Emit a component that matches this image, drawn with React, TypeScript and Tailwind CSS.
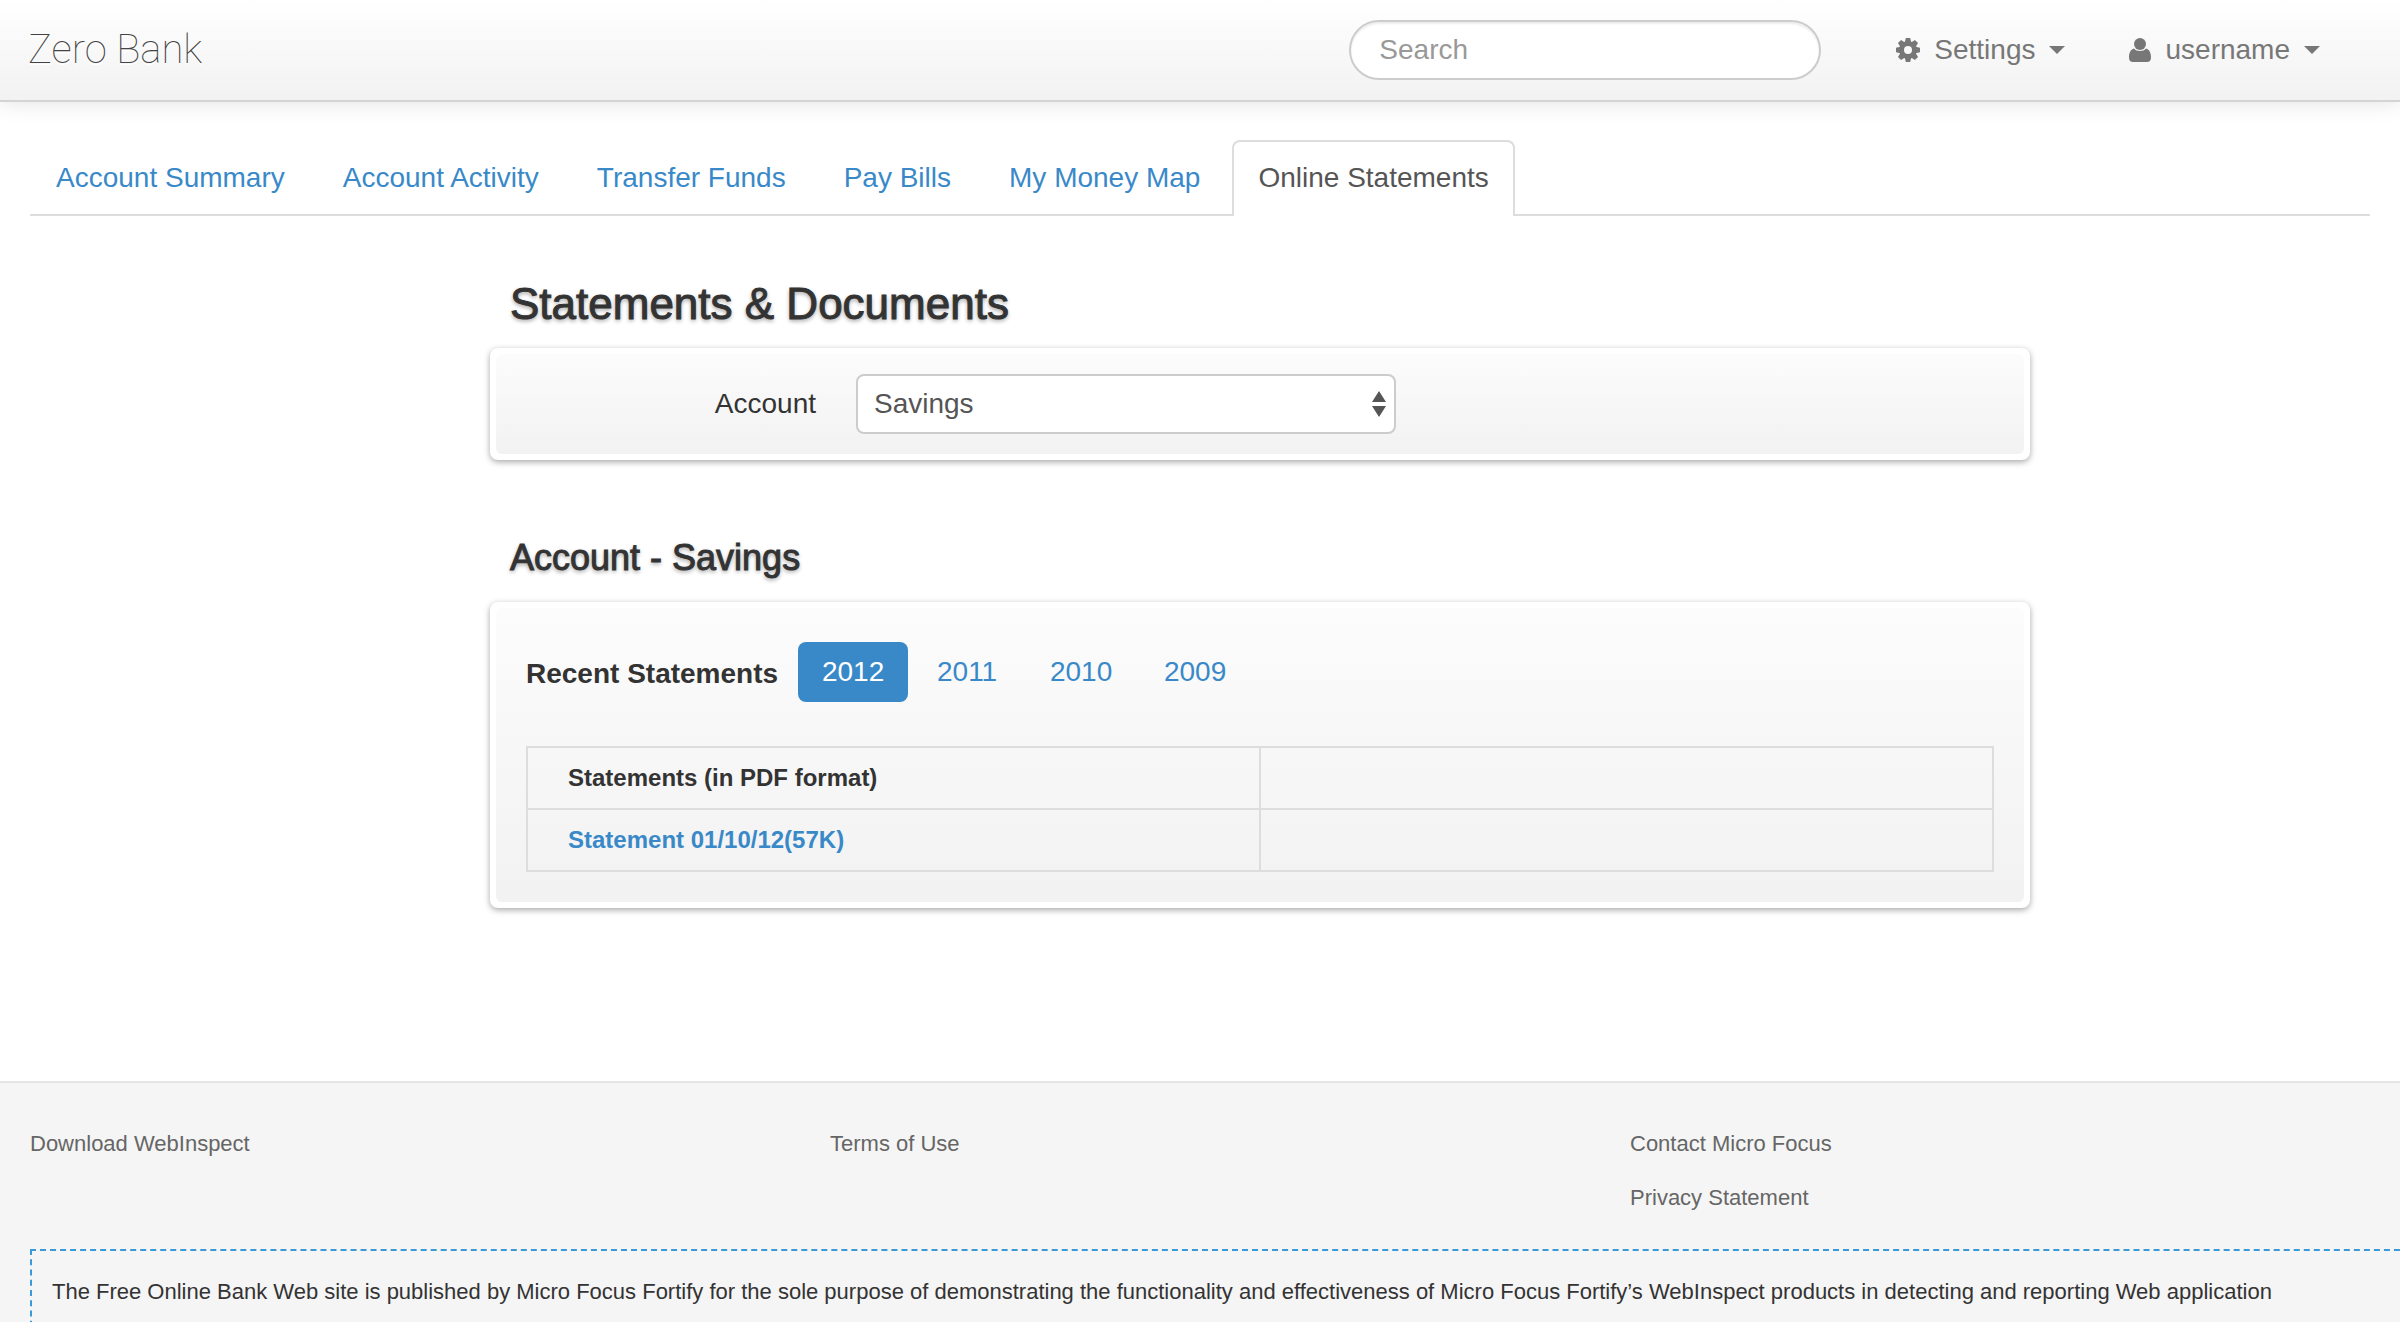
import React from 'react';

const tabs = ['Account Summary', 'Account Activity', 'Transfer Funds', 'Pay Bills', 'My Money Map'];
const years = ['2011', '2010', '2009'];

function GearIcon() {
  const angles = [0, 45, 90, 135];
  return (
    <svg viewBox="0 0 24 24" className="size-6" fill="currentColor" aria-hidden="true">
      <mask id="hub">
        <rect width="24" height="24" fill="white" />
        <circle cx="12" cy="12" r="4" fill="black" />
      </mask>
      <g mask="url(#hub)">
        <circle cx="12" cy="12" r="9" />
        {angles.map((a) => (
          <path key={a} d="M9.800 0h4.400l1 4.500v15l-1 4.500h-4.400l-1-4.500v-15z" transform={`rotate(${a} 12 12)`} />
        ))}
      </g>
    </svg>
  );
}

function UserIcon() {
  return (
    <svg viewBox="0 0 22 24" className="h-6 w-[22px]" fill="currentColor" aria-hidden="true">
      <circle cx="11" cy="6" r="6" />
      <path d="M5 10.500C1.500 11.500 0 15 0 19.500C0 22.500 1.500 24 4 24H18C20.500 24 22 22.500 22 19.500C22 15 20.500 11.500 17 10.500C15.500 12.300 13.500 13 11 13S6.500 12.300 5 10.500Z" />
    </svg>
  );
}

function Caret() {
  return (
    <svg viewBox="0 0 16 8" className="h-2 w-4" fill="currentColor" aria-hidden="true">
      <path d="M0 0H16L8 8Z" />
    </svg>
  );
}

function Panel({ className, children }: { className: string; children: React.ReactNode }) {
  return (
    <div className="rounded-lg bg-white p-1.5 shadow-[0_2px_6px_rgba(0,0,0,0.35)]">
      <div className={`rounded-md bg-linear-to-b from-[#fcfcfc] to-[#f2f2f2] ${className}`}>{children}</div>
    </div>
  );
}

export default function App() {
  return (
    <div className="flex h-screen flex-col overflow-hidden bg-white font-['Liberation_Sans',Arial,sans-serif] text-[28px] leading-10 text-[#333]">
      <header className="flex shrink-0 items-center border-b-2 border-[#d4d4d4] bg-linear-to-b from-white to-[#f2f2f2] py-5 pr-20 pl-7 text-[#777] shadow-[0_2px_20px_rgba(0,0,0,0.1)] [text-shadow:0_2px_0_white]">
        <a href="#" className="mr-auto font-[Roboto] text-[40px] font-thin text-[#444]">
          Zero Bank
        </a>
        <input
          type="search"
          aria-label="Search"
          placeholder="Search"
          className="mr-[75px] h-[60px] w-[472px] rounded-full border-2 border-[#ccc] bg-white px-7 text-[#555] shadow-[inset_0_2px_2px_rgba(0,0,0,0.075)] placeholder:text-[#999]"
        />
        <button type="button" className="mr-16 flex items-center gap-3.5">
          <GearIcon />
          <span>Settings</span>
          <Caret />
        </button>
        <button type="button" className="flex items-center gap-3.5">
          <UserIcon />
          <span>username</span>
          <Caret />
        </button>
      </header>

      <nav className="mx-[30px] mt-[38px] flex shrink-0 gap-1.5 border-b-2 border-[#ddd]">
        {tabs.map((t) => (
          <a key={t} href="#" className="px-[26px] pt-[18px] pb-4 text-[#3989c9]">
            {t}
          </a>
        ))}
        <a
          href="#"
          aria-current="page"
          className="-mb-0.5 rounded-t-lg border-2 border-b-0 border-[#ddd] bg-white px-6 pt-4 pb-[18px] text-[#555]"
        >
          Online Statements
        </a>
      </nav>

      <main className="mx-auto w-full max-w-[1660px] shrink-0 pb-[173px] pl-[120px]">
        <h1 className="mt-[58px] mb-[14px] pl-5 text-[44px] leading-[60px] [-webkit-text-stroke:1px_#333] [text-shadow:0_2px_4px_rgba(0,0,0,0.4)]">
          Statements &amp; Documents
        </h1>
        <Panel className="flex h-[100px] items-center">
          <label htmlFor="account" className="w-[330px] pr-2.5 text-right">
            Account
          </label>
          <div className="relative ml-[30px]">
            <select
              id="account"
              defaultValue="Savings"
              className="h-[60px] w-[540px] appearance-none rounded-lg border-2 border-[#ccc] bg-white px-4 text-[#555]"
            >
              <option>Savings</option>
            </select>
            <svg
              viewBox="0 0 14 26"
              className="pointer-events-none absolute top-[17px] right-2.5 h-[26px] w-3.5"
              fill="#555"
              aria-hidden="true"
            >
              <path d="M0 11L7 0L14 11ZM0 15H14L7 26Z" />
            </svg>
          </div>
        </Panel>

        <h2 className="mt-[68px] mb-[14px] pl-5 text-[36px] leading-[60px] [-webkit-text-stroke:1px_#333] [text-shadow:0_2px_4px_rgba(0,0,0,0.4)]">
          Account - Savings
        </h2>
        <Panel className="px-[30px] pt-[34px] pb-[30px]">
          <div className="flex items-center gap-1">
            <h3 className="mr-4 pt-1 font-bold">Recent Statements</h3>
            <button type="button" className="h-[60px] w-[110px] rounded-lg bg-[#3989c9] text-white">
              2012
            </button>
            {years.map((y) => (
              <button key={y} type="button" className="h-[60px] w-[110px] text-[#3989c9]">
                {y}
              </button>
            ))}
          </div>
          <table className="mt-11 w-full table-fixed border-collapse text-left text-[24px] leading-10 font-bold">
            <tbody>
              <tr>
                <th className="h-[62px] border-2 border-[#ddd] px-10">Statements (in PDF format)</th>
                <td className="border-2 border-[#ddd]" />
              </tr>
              <tr>
                <td className="h-[62px] border-2 border-[#ddd] px-10">
                  <a href="#" className="text-[#3989c9]">
                    Statement 01/10/12(57K)
                  </a>
                </td>
                <td className="border-2 border-[#ddd]" />
              </tr>
            </tbody>
          </table>
        </Panel>
      </main>

      <footer className="grow border-t-2 border-[#e5e5e5] bg-[#f5f5f5] pt-[34px] text-[22px] leading-[54px] text-[#666]">
        <div className="grid grid-cols-3">
          <a href="#" className="pl-[30px]">
            Download WebInspect
          </a>
          <a href="#" className="pl-[30px]">
            Terms of Use
          </a>
          <div className="flex flex-col pl-[30px]">
            <a href="#">Contact Micro Focus</a>
            <a href="#">Privacy Statement</a>
          </div>
        </div>
        <div className="mt-6 -mr-10 ml-[30px] h-40 border-2 border-dashed border-[#3b99d8] px-5 pt-[21px] leading-10 whitespace-nowrap text-[#333]">
          The Free Online Bank Web site is published by Micro Focus Fortify for the sole purpose of demonstrating the
          functionality and effectiveness of Micro Focus Fortify’s WebInspect products in detecting and reporting Web
          application
        </div>
      </footer>
    </div>
  );
}
